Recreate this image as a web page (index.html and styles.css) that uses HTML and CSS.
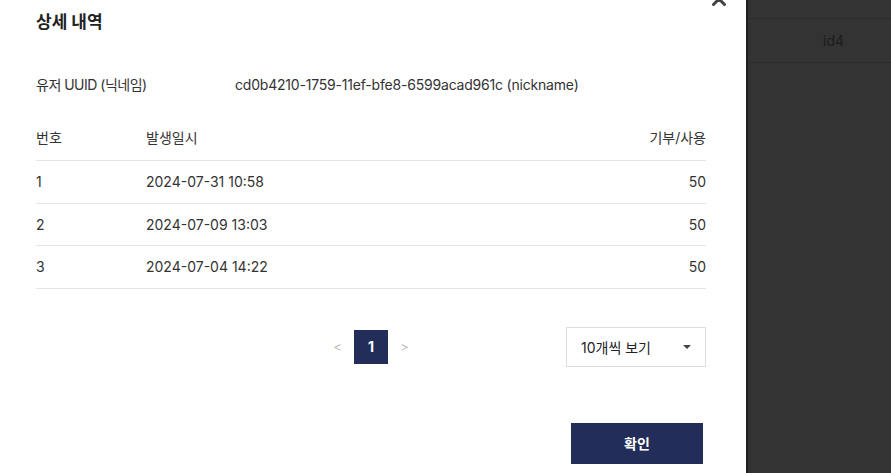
FILE: index.html
```html
<!DOCTYPE html>
<html lang="ko">
<head>
    <meta charset="utf-8">
    <title>상세 내역</title>
    <link rel="stylesheet" href="styles.css">
</head>
<body>
    <div class="modal">
        <button class="close" aria-label="닫기">
            <svg width="16" height="16" viewBox="0 0 16 16">
                <path d="M2.5 2.5 L13.5 13.5 M13.5 2.5 L2.5 13.5" stroke="#444" stroke-width="3" stroke-linecap="round"/>
            </svg>
        </button>
        <h2 class="title">상세 내역</h2>

        <div class="info">
            <span class="info-label">유저 UUID (닉네임)</span>
            <span class="info-value">cd0b4210-1759-11ef-bfe8-6599acad961c (nickname)</span>
        </div>

        <table class="list">
            <thead>
                <tr>
                    <th class="col-no">번호</th>
                    <th>발생일시</th>
                    <th class="col-amount">기부/사용</th>
                </tr>
            </thead>
            <tbody>
                <tr>
                    <td class="col-no">1</td>
                    <td>2024-07-31 10:58</td>
                    <td class="col-amount">50</td>
                </tr>
                <tr>
                    <td class="col-no">2</td>
                    <td>2024-07-09 13:03</td>
                    <td class="col-amount">50</td>
                </tr>
                <tr>
                    <td class="col-no">3</td>
                    <td>2024-07-04 14:22</td>
                    <td class="col-amount">50</td>
                </tr>
            </tbody>
        </table>

        <div class="paging-row">
            <div class="pager">
                <span class="pager-arrow">&lt;</span>
                <span class="pager-num active">1</span>
                <span class="pager-arrow">&gt;</span>
            </div>
            <div class="page-size">
                <span>10개씩 보기</span>
                <span class="caret"></span>
            </div>
        </div>

        <div class="actions">
            <button class="btn-confirm">확인</button>
        </div>
    </div>

    <div class="backdrop">
        <div class="bg-row">id4</div>
    </div>
</body>
</html>
```

FILE: styles.css
```css
html, body {
    margin: 0;
    height: 100%;
}
body {
    display: flex;
    background: #333;
    font-family: Inter, "Noto Sans CJK KR", sans-serif;
    color: #333;
    overflow: hidden;
}
.modal {
    position: relative;
    width: 746px;
    box-sizing: border-box;
    padding: 12px 40px 0 36px;
    background: #fff;
    box-shadow: 2px 0 0 #1f1f1f;
    flex-shrink: 0;
}
.close {
    position: absolute;
    top: -9px;
    left: 711px;
    padding: 0;
    border: 0;
    background: none;
    line-height: 0;
}
.title {
    margin: 0;
    font-size: 17px;
    line-height: 20px;
    font-weight: 700;
    color: #222;
}
.info {
    display: flex;
    margin-top: 43px;
    font-size: 14px;
    line-height: 20px;
}
.info-label {
    width: 199px;
    letter-spacing: -0.5px;
}
.info-value {
    letter-spacing: -0.2px;
}
.list {
    width: 100%;
    margin-top: 18px;
    border-collapse: collapse;
    font-size: 14px;
}
.list th,
.list td {
    padding: 0;
    text-align: left;
    font-weight: 400;
    border-bottom: 1px solid #e6e6e6;
}
.list th {
    height: 47px;
}
.list td {
    height: 41.5px;
}
.list .col-no {
    width: 110px;
}
.list .col-amount {
    text-align: right;
}
.paging-row {
    position: relative;
    display: flex;
    justify-content: center;
    align-items: center;
    height: 40px;
    margin-top: 38px;
}
.pager {
    display: flex;
    align-items: center;
    gap: 12px;
}
.pager-arrow {
    width: 9px;
    text-align: center;
    font-size: 13px;
    color: #bbb;
}
.pager-num {
    width: 34px;
    height: 34px;
    line-height: 34px;
    text-align: center;
    font-size: 14px;
    font-weight: 700;
}
.pager-num.active {
    background: #232d5a;
    color: #fff;
}
.page-size {
    position: absolute;
    right: 0;
    top: 0;
    display: flex;
    justify-content: space-between;
    align-items: center;
    width: 140px;
    height: 40px;
    box-sizing: border-box;
    padding: 0 14px 0 14px;
    border: 1px solid #ddd;
    font-size: 14px;
    color: #222;
}
.caret {
    width: 0;
    height: 0;
    border-left: 4px solid transparent;
    border-right: 4px solid transparent;
    border-top: 4px solid #444;
}
.actions {
    display: flex;
    justify-content: flex-end;
    margin-top: 56px;
    padding-right: 3px;
}
.btn-confirm {
    width: 132px;
    height: 41px;
    border: 0;
    background: #232d5a;
    color: #fff;
    font-family: inherit;
    font-size: 14px;
    font-weight: 700;
}
.backdrop {
    flex: 1;
    padding-top: 18px;
}
.bg-row {
    height: 43px;
    line-height: 43px;
    padding-left: 77px;
    border-top: 1px solid #2b2b2b;
    border-bottom: 1px solid #2b2b2b;
    font-size: 14px;
    color: #1c1c1c;
}
```
